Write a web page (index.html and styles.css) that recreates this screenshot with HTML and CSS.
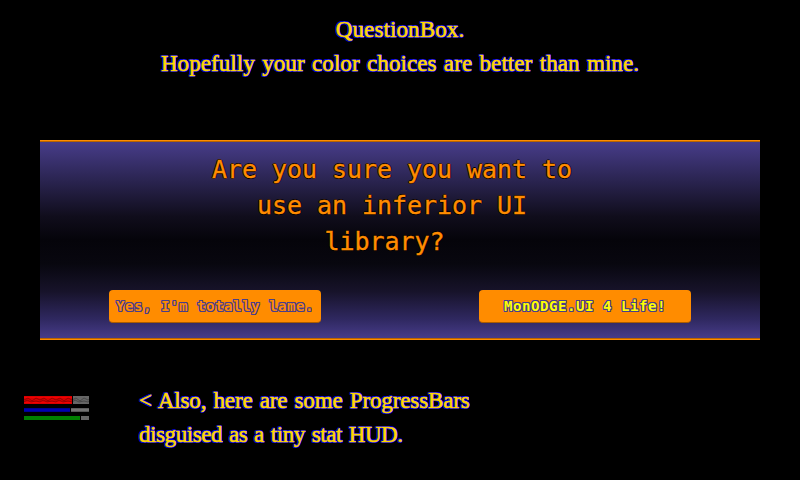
FILE: index.html
```
<!DOCTYPE html>
<html lang="en">
<head>
<meta charset="utf-8">
<title>QuestionBox</title>
<link rel="stylesheet" href="styles.css">
</head>
<body>
<main class="screen">
  <header class="caption heading">
    <div><span class="title">QuestionBox.</span></div>
    <div><span class="subtitle">Hopefully your color choices are better than mine.</span></div>
  </header>
  <section class="question">
    <div class="prompt">
      <div>Are you sure you want to</div>
      <div>use an inferior UI</div>
      <div class="last">library?</div>
    </div>
    <div class="actions">
      <button class="option">Yes, I'm totally lame.</button>
      <button class="option selected">MonODGE.UI 4 Life!</button>
    </div>
  </section>
  <footer class="hud">
    <div class="bars">
      <svg class="health" width="65" height="8" viewBox="0 0 65 8">
        <defs>
          <pattern id="rope" width="16" height="8" patternUnits="userSpaceOnUse">
            <path d="M0 4L4 2L8 5L12 2L16 4M0 6L3 4L7 6L12 5L16 6" fill="none" stroke="#000" stroke-opacity=".3"/>
          </pattern>
        </defs>
        <path fill="#d80000" d="M0 0h48v8H0z"/>
        <path fill="#f40000" d="M0 1h48v1H0zM0 6h48v1H0z"/>
        <path fill="#666" d="M49 0h16v8H49z"/>
        <path fill="url(#rope)" d="M0 0h48v8H0zM49 0h16v8H49z"/>
      </svg>
      <div class="bar mana"><i></i><b></b></div>
      <div class="bar stamina"><i></i><b></b></div>
    </div>
    <div class="caption note">
      <div><span class="note-a">&lt; Also, here are some ProgressBars</span></div>
      <div><span class="note-b">disguised as a tiny stat HUD.</span></div>
    </div>
  </footer>
</main>
</body>
</html>
```
FILE: styles.css
```
* { box-sizing: border-box; }
body { margin: 0; background: #000; }
.screen { width: 800px; height: 480px; overflow: hidden; display: flex; flex-direction: column; }
.caption {
  font: 23px/34px "Liberation Serif", serif;
  color: #ffd700;
  -webkit-text-stroke: 0.6px #ffd700;
  text-shadow: 1px 0 #0000e8, -1px 0 #0000e8, 0 1px #0000e8, 0 -1px #0000e8,
    1px 1px #0000b0, -1px 1px #0000b0, 1px -1px #0000b0, -1px -1px #0000b0;
  white-space: nowrap;
}
.heading { height: 140px; padding-top: 13px; text-align: center; }
.title { letter-spacing: 0.12px; }
.subtitle { letter-spacing: 0.08px; word-spacing: 1.5px; }
.note { margin-left: -1px; padding-top: 1px; }
.note-a { letter-spacing: -0.12px; word-spacing: 1.5px; }
.note-b { letter-spacing: -0.42px; word-spacing: 1.5px; }
.question {
  width: 720px; height: 200px; margin: 0 40px;
  border-top: 1px solid #ff8c00; border-bottom: 1px solid #b86400;
  box-shadow: inset 0 1px #b86400, inset 0 -1px #ff8c00;
  background: linear-gradient(#483d8b 0%, #2a2450 20%, #100d1c 38%, #05040a 50%, #08070f 62%, #17132a 76%, #2f2860 90%, #483d8b 100%);
}
.question { border-bottom-color: #ff8c00; box-shadow: inset 0 1px #b86400, inset 0 -1px #b86400; }
.prompt {
  height: 149px; padding: 11px 16px 0 0;
  font: 25px/36px "DejaVu Sans Mono", monospace; letter-spacing: -0.05px;
  color: #ff8c00; text-align: center;
  text-shadow: 1px 0 #000, -1px 0 #000, 0 1px #000, 0 -1px #000;
  -webkit-text-stroke: 0.35px #ff8c00;
}
.last { padding-right: 15px; }
.actions { display: flex; gap: 158px; padding-left: 69px; }
.option {
  width: 212px; height: 33px; padding: 0; border: 0; border-bottom: 1px solid #a85c00; border-radius: 4px;
  background: #ff8c00; color: #ff8c00;
  font: bold 14px/32px "DejaVu Sans Mono", monospace; letter-spacing: 0.57px; white-space: nowrap;
  text-shadow: 1px 0 #483d8b, -1px 0 #483d8b, 0 1px #483d8b, 0 -1px #483d8b,
    1px 1px #483d8b, -1px 1px #483d8b, 1px -1px #483d8b, -1px -1px #483d8b;
}
.selected { color: #ff0; }
.hud { display: flex; padding: 43px 0 0 24px; }
.bars { width: 116px; padding-top: 13px; }
.health { display: block; }
.bar { display: flex; gap: 1px; height: 4px; margin-top: 4px; }
.bar b { flex: none; background: #666; }
.bar i { flex: none; }
.mana i { width: 46px; background: linear-gradient(#000080, #0000c0 50%, #000080); }
.mana b { width: 18px; background: linear-gradient(#505050, #808080 50%, #484848); }
.stamina i { width: 56px; background: #008000; }
.stamina b { width: 8px; }
```
